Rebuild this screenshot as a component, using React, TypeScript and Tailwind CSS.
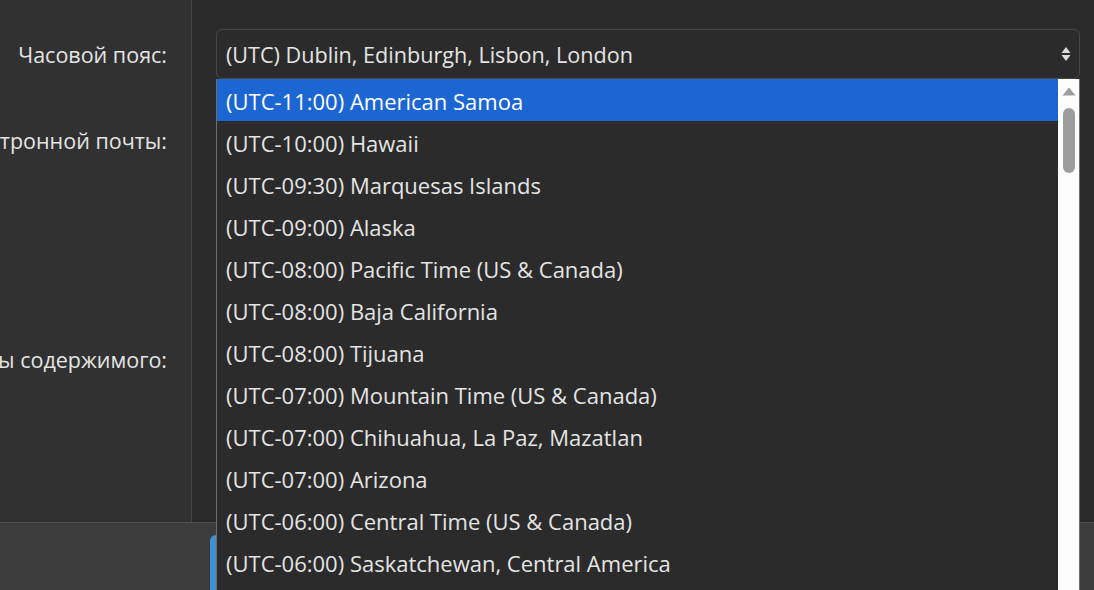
import React from 'react';

const zones = [
  '(UTC-11:00) American Samoa',
  '(UTC-10:00) Hawaii',
  '(UTC-09:30) Marquesas Islands',
  '(UTC-09:00) Alaska',
  '(UTC-08:00) Pacific Time (US & Canada)',
  '(UTC-08:00) Baja California',
  '(UTC-08:00) Tijuana',
  '(UTC-07:00) Mountain Time (US & Canada)',
  '(UTC-07:00) Chihuahua, La Paz, Mazatlan',
  '(UTC-07:00) Arizona',
  '(UTC-06:00) Central Time (US & Canada)',
  '(UTC-06:00) Saskatchewan, Central America',
];

const labels = [
  { text: 'Часовой пояс:', top: 'mt-[40px]' },
  { text: 'Адрес электронной почты:', top: 'mt-[56px]' },
  { text: 'Фильтры содержимого:', top: 'mt-[189px]' },
];

const SortArrows: React.FC = () => (
  <svg width="10" height="16" viewBox="0 0 10 16" className="text-[#dcdcdc]">
    <path d="M5 1 L9.5 7 H0.5 Z" fill="currentColor" />
    <path d="M5 15 L9.5 9 H0.5 Z" fill="currentColor" />
  </svg>
);

const App: React.FC = () => {
  return (
    <div
      className="relative w-[1094px] h-[590px] overflow-hidden bg-[#2b2b2b] text-[#e4e4e4]"
      style={{ fontFamily: '"Open Sans", "Noto Sans", sans-serif' }}
    >
      <div className="flex h-[522px]">
        {/* settings labels */}
        <div className="w-[192px] shrink-0 bg-[#313131] border-r border-[#474747] overflow-hidden flex flex-col pr-[24px]">
          {labels.map((l) => (
            <div key={l.text} className={`flex justify-end whitespace-nowrap text-[21.5px] leading-[30px] ${l.top}`}>
              {l.text}
            </div>
          ))}
        </div>

        <div className="flex-1 pt-[29px] pl-[24px] pr-[14px]">
          <div className="h-[50px] rounded-[6px] border border-[#474747] bg-[#2b2b2b] flex items-center justify-between pl-[9px] pr-[8px]">
            <span className="text-[21.6px] leading-[30px] pt-[2px]">(UTC) Dublin, Edinburgh, Lisbon, London</span>
            <SortArrows />
          </div>
        </div>
      </div>

      <div className="h-[68px] bg-[#3c3c3c] border-t border-[#4e4e4e] pt-[12px] pl-[210px]">
        <div className="w-[140px] h-[60px] rounded-tl-[6px] bg-[#4191d0]" />
      </div>

      {/* open timezone list */}
      <div className="absolute left-[216px] top-[79px] w-[864px] h-[520px] flex border-l border-r border-[#6e6e6e] bg-[#2b2b2b]">
        <ul className="flex-1">
          {zones.map((z, i) => (
            <li
              key={z}
              className={`h-[42px] flex items-center pl-[9px] pt-[2px] text-[22px] whitespace-nowrap ${
                i === 0 ? 'bg-[#1b66d3] text-white' : ''
              }`}
            >
              {z}
            </li>
          ))}
        </ul>
        <div className="w-[21px] bg-[#fdfdfd] flex flex-col items-center pt-[8px]">
          <svg width="14" height="9" viewBox="0 0 14 9">
            <path d="M7 0.5 L13.5 8.5 H0.5 Z" fill="#9d9d9d" />
          </svg>
          <div className="mt-[12px] w-[12px] h-[65px] rounded-full bg-[#9d9d9d]" />
        </div>
      </div>
    </div>
  );
};

export default App;
